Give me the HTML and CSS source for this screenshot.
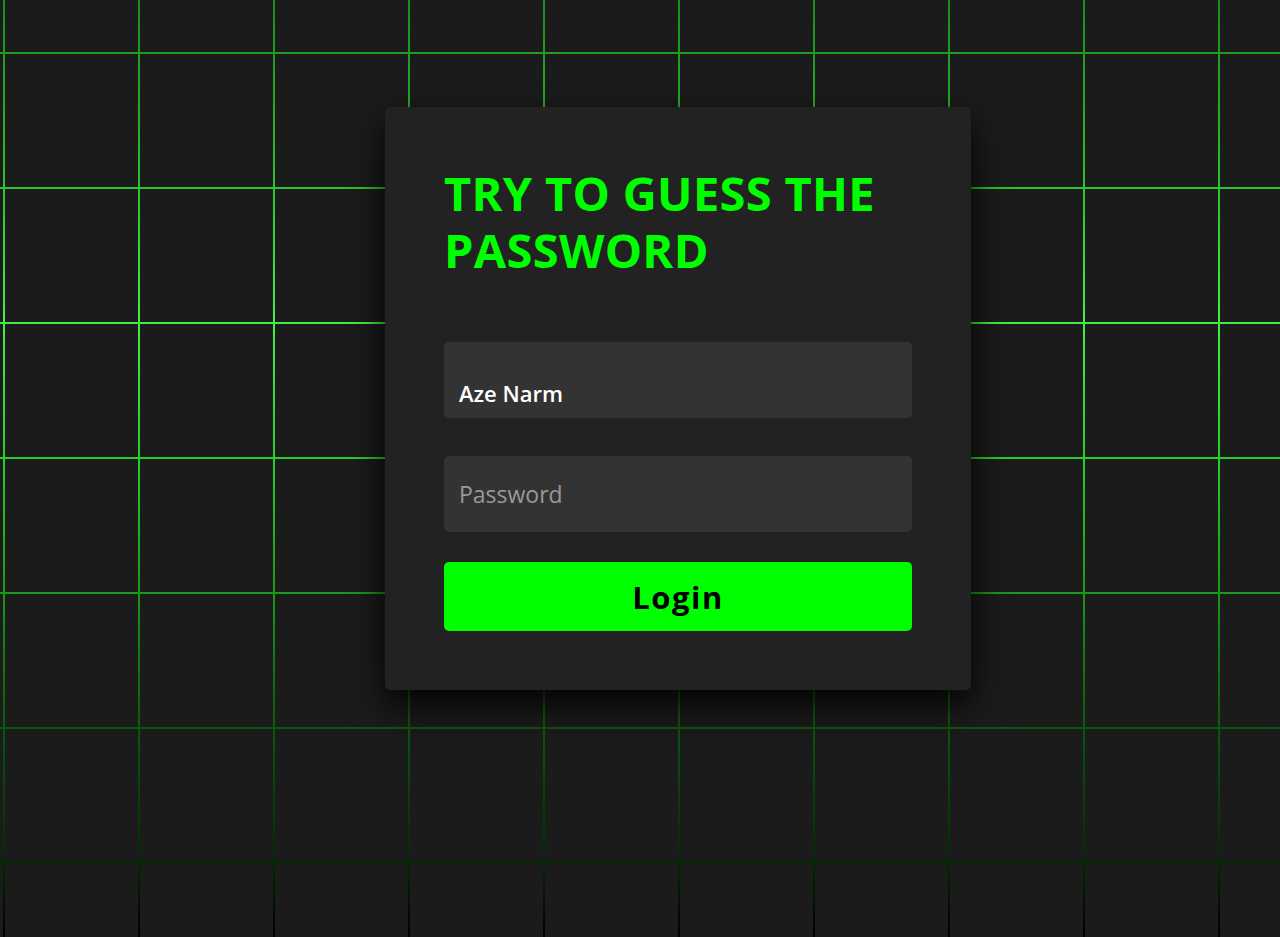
FILE: index.html
```html
<!DOCTYPE html>
<html lang="en">
<head>
<meta charset="utf-8">
<title>Try to guess the password</title>
<link rel="stylesheet" href="styles.css">
</head>
<body>
<section class="stage">
  <div class="grid">
    <span></span><span></span><span></span><span></span><span></span><span></span><span></span><span></span><span></span><span></span><span></span>
    <span></span><span></span><span></span><span></span><span></span><span></span><span></span><span></span><span></span><span></span><span></span>
    <span></span><span></span><span></span><span></span><span></span><span></span><span></span><span></span><span></span><span></span><span></span>
    <span></span><span></span><span></span><span></span><span></span><span></span><span></span><span></span><span></span><span></span><span></span>
    <span></span><span></span><span></span><span></span><span></span><span></span><span></span><span></span><span></span><span></span><span></span>
    <span></span><span></span><span></span><span></span><span></span><span></span><span></span><span></span><span></span><span></span><span></span>
    <span></span><span></span><span></span><span></span><span></span><span></span><span></span><span></span><span></span><span></span><span></span>
    <span></span><span></span><span></span><span></span><span></span><span></span><span></span><span></span><span></span><span></span><span></span>
  </div>
  <form class="card" onsubmit="return false">
    <h2 class="title">TRY TO GUESS THE PASSWORD</h2>
    <div class="field">
      <input class="input input-filled" type="text" value="Aze Narm">
    </div>
    <div class="field">
      <input class="input" type="password" placeholder="Password">
    </div>
    <button class="btn" type="submit">Login</button>
  </form>
</section>
</body>
</html>
```

FILE: styles.css
```css
* { box-sizing: border-box; }

html, body {
  margin: 0;
  padding: 0;
  height: 100%;
}

body {
  background: #000;
  overflow: hidden;
  font-family: "Open Sans", "Noto Sans", sans-serif;
}

.stage {
  position: relative;
  width: 1280px;
  height: 937px;
  overflow: hidden;
  background: linear-gradient(to bottom,
    #1c8c1c 0%,
    #2cc22c 20%,
    #40f040 34%,
    #2ad02a 48%,
    #1a9a1a 63%,
    #0c5a0c 77%,
    #022a02 92%,
    #000 100%);
}

.grid {
  display: grid;
  grid-template-columns: repeat(11, 133px);
  grid-auto-rows: 133px;
  gap: 2px;
  margin-left: -130px;
  margin-top: -81px;
}

.grid span {
  background: #1b1b1b;
}

.card {
  position: absolute;
  left: 385px;
  top: 107px;
  width: 586px;
  height: 583px;
  padding: 58px 59px 59px;
  background: #222;
  border-radius: 5px;
  box-shadow: 0 15px 35px rgba(0, 0, 0, 0.9);
  display: flex;
  flex-direction: column;
}

.title {
  margin: 0 0 63px;
  color: #00ff00;
  font-size: 47px;
  font-weight: 700;
  line-height: 57px;
  letter-spacing: 0.3px;
}

.field {
  margin-bottom: 38px;
}

.field + .field {
  margin-bottom: 30px;
}

.input {
  display: block;
  width: 100%;
  height: 76px;
  padding: 0 15px;
  border: none;
  outline: none;
  border-radius: 5px;
  background: #333;
  color: #fff;
  font-family: inherit;
  font-size: 23px;
}

.input::placeholder {
  color: #999;
}

.input-filled {
  padding-top: 26px;
  font-size: 22px;
  font-weight: 600;
}

.btn {
  display: block;
  width: 100%;
  height: 69px;
  border: none;
  border-radius: 5px;
  background: #00ff00;
  color: #000;
  font-family: inherit;
  font-size: 31px;
  font-weight: 700;
  letter-spacing: 1.5px;
  cursor: pointer;
}
```
